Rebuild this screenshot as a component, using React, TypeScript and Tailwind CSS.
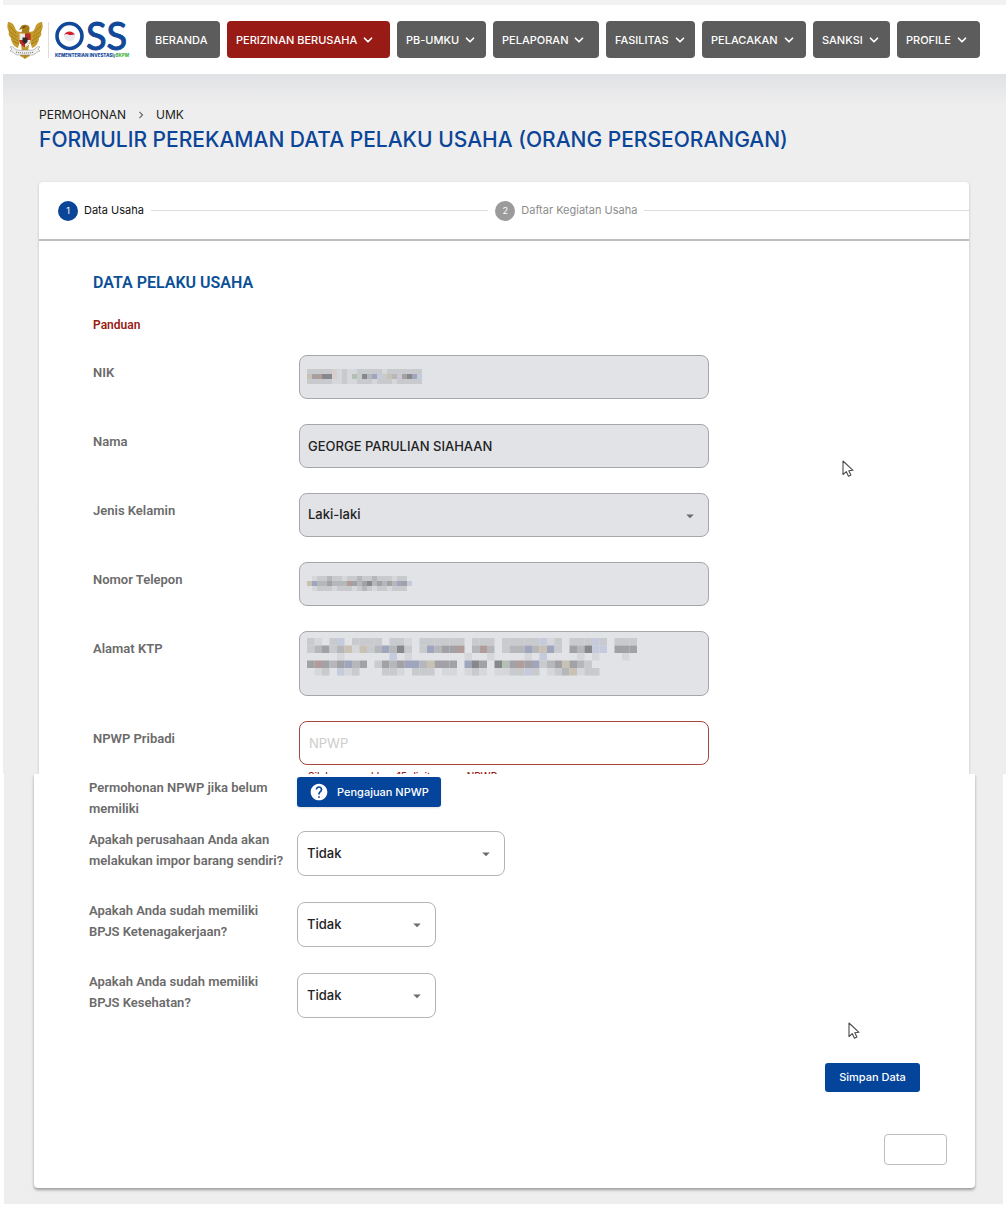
import type { ReactNode } from 'react';
import { FiChevronDown } from 'react-icons/fi';
import { MdArrowDropDown, MdChevronRight, MdHelp } from 'react-icons/md';

interface NavItem {
    label: string;
    width: string;
    menu?: boolean;
    active?: boolean;
}

const NAV_ITEMS: NavItem[] = [
    { label: 'BERANDA', width: 'min-w-[74px]' },
    { label: 'PERIZINAN BERUSAHA', width: 'min-w-[163px]', menu: true, active: true },
    { label: 'PB-UMKU', width: 'min-w-[89px]', menu: true },
    { label: 'PELAPORAN', width: 'min-w-[106px]', menu: true },
    { label: 'FASILITAS', width: 'min-w-[89px]', menu: true },
    { label: 'PELACAKAN', width: 'min-w-[104px]', menu: true },
    { label: 'SANKSI', width: 'min-w-[77px]', menu: true },
    { label: 'PROFILE', width: 'min-w-[83px]', menu: true },
];

// Each letter is one block of the mosaic; a space leaves the field colour
const TONES: Record<string, string> = {
    a: '#d6d7da',
    b: '#c9cacd',
    c: '#b6b7ba',
    d: '#a2a2a6',
    e: '#87888c',
    p: '#d9cdd0',
    r: '#b09c98',
    n: '#9fa5bd',
    l: '#c5cbdc',
    g: '#b4bfb5',
    y: '#c8c1b4',
};

const MASK_NIK = ['bbbbbpabaabbbbbabbbbbbb', 'ydreepabagbecnlbycbdenl', 'bbbbbaabaabbbabbbabbbbb'];
const MASK_PHONE = [' abbcbbabbcbbcbbbabb', 'ynccdcccrdcdecdcdcndl', ' abbbabbbabcbabbabbb'];
const MASK_ADDRESS = [
    'ba bl bbbb bba bbbbbb bbb bbbbblab bbblb bbb',
    'bcdbcyaybcnceb bncddr crc bccncynb dcell ddd',
    '    a      l a       a  a    a l    a a   a ',
    'drdcdncd bdcdnncyddd ned egdrdnbcdydcb',
    ' ab lab   bba bbb aa aba aabblb abcyabb',
];

function Mosaic({ rows, block }: { rows: string[]; block: number }) {
    const columns = Math.max(...rows.map((row) => row.length));
    return (
        <svg width={columns * block} height={rows.length * block} aria-hidden="true">
            {rows.map((row, y) =>
                row.split('').map((tone, x) =>
                    TONES[tone] ? (
                        <rect key={`${x}-${y}`} x={x * block} y={y * block} width={block} height={block} fill={TONES[tone]} />
                    ) : null
                )
            )}
        </svg>
    );
}

function Garuda() {
    return (
        <svg width="37" height="38" viewBox="0 0 37 38" role="img" aria-label="Garuda Pancasila">
            <path d="M1 1c3 0 6 2 7 6 1 3 3 4 6 4l-1 9-2 7c-3-1-5-3-6-6-1-1-1-3-1-4-2-2-3-4-2-6C0 8 0 4 1 1z" fill="#c39a2b" />
            <path d="M35 1c-3 0-6 2-7 6-1 3-3 4-6 4l1 9 2 7c3-1 5-3 6-6 1-1 1-3 1-4 2-2 3-4 2-6 2-3 2-7 1-10z" fill="#c39a2b" />
            <path d="M2 5l7 7M2 10l8 6M4 15l7 5M6 20l6 3M34 5l-7 7M34 10l-8 6M32 15l-7 5M30 20l-6 3" stroke="#9a7517" strokeWidth=".8" fill="none" />
            <path d="M13 7c1-3 4-4 7-3 3 1 3 4 2 6l2 5-1 8H13l-1-8 3-5v-2l-3 1z" fill="#a87d1c" />
            <path d="M15 6l4-1-2 2z" fill="#4d390c" />
            <path d="M14 24h8l-1 6 2 5-2 1-3 2-3-2-2-1 2-5z" fill="#c39a2b" />
            <path d="M16 29l-1 6M18 29v8M20 29l1 6" stroke="#8f6a10" strokeWidth=".8" />
            <path d="M12.500 12.500H18V19h-5.500zM18 19h5.500c0 3-2 5.500-5.500 7.500z" fill="#ece9e4" />
            <path d="M18 12.500h5.500V19H18zM12.500 19H18v7.500c-3.500-2-5.500-4.500-5.500-7.500z" fill="#bb2a26" />
            <path d="M15.500 16.500h5v4.500L18 23l-2.500-2z" fill="#2c2929" />
            <path d="M3 26c2-1 4 0 5 2 3 2 6 1 10 1s7 1 10-1c1-2 3-3 5-2l-2 2 2 2c-3 0-4 3-7 4-5 0-11 0-16 0-3-1-4-4-7-4l2-2z" fill="#f0f0ee" stroke="#85847e" strokeWidth=".5" />
            <path d="M9 31c3 1 6 1 9 1s6 0 9-1" stroke="#55544f" strokeWidth=".9" strokeDasharray="1 1" fill="none" />
        </svg>
    );
}

function OssLogo() {
    return (
        <svg width="80" height="38" viewBox="0 0 80 38" className="overflow-visible" role="img" aria-label="OSS Kementerian Investasi/BKPM">
            <circle cx="14.500" cy="15" r="12.500" fill="none" stroke="#11489a" strokeWidth="3.600" />
            <path d="M9 14a6 6 0 0 1 11 0c-2-1-4 1-6 0s-3-1-5 0z" fill="#d2202c" />
            <path d="M9 14c2-1 3-1 5 0s4-1 6 0c0 5-3 6-5 6s-6-1-6-6z" fill="#e9e9ee" />
            <text x="31" y="29" fontFamily="Lato, sans-serif" fontWeight="400" fontSize="38" fill="#11489a" stroke="#11489a" strokeWidth="1">SS</text>
            <text x="0" y="36" fontFamily="Inter, sans-serif" fontWeight="800" fontSize="4.500" fill="#11489a">
                KEMENTERIAN INVESTASI/<tspan fontStyle="italic" fill="#4fb748">BKPM</tspan>
            </text>
        </svg>
    );
}

function Cursor() {
    return (
        <svg width="12" height="18" viewBox="0 0 12 18" aria-hidden="true">
            <path d="M1 1v13.500l3.300-2.800 2.200 4.600 2.400-1.200-2.100-4.300 4.200-.5z" fill="#fff" stroke="#4a4a4e" strokeWidth="1.100" strokeLinejoin="round" />
        </svg>
    );
}

function Field({ id, label, children }: { id: string; label: string; children: ReactNode }) {
    return (
        <div className="flex items-start">
            <label htmlFor={id} className="w-[206px] shrink-0 pt-2 text-[13px] leading-5 font-semibold text-[#6b6b6b]">{label}</label>
            <div className="relative w-full max-w-[410px]">{children}</div>
        </div>
    );
}

function Question({ id, label, width }: { id: string; label: string; width: string }) {
    return (
        <div className="flex items-start">
            <label htmlFor={id} className="w-[208px] shrink-0 pr-3 text-[13px] leading-[21px] font-semibold text-[#6b6b6b]">{label}</label>
            <div className={`relative mt-[2px] ${width}`}>
                <select id={id} className="h-[45px] w-full appearance-none rounded-lg border border-[#b4b4b6] bg-white px-[9px] font-[Inter,sans-serif] text-[13px] font-medium text-[#222]">
                    <option>Tidak</option>
                </select>
                <MdArrowDropDown className="pointer-events-none absolute top-[14px] right-[10px] text-lg text-[#6b6b6f]" />
            </div>
        </div>
    );
}

const disabledField = 'block w-full rounded-lg border border-[#a5a7ab] bg-[#e1e3e7] px-2 font-[Inter,sans-serif] text-[13px] font-medium text-[#222]';

export default function App() {
    return (
        <div className="relative min-h-screen bg-white pb-[10px] font-[Roboto,sans-serif]">
            <header className="ml-[3px] border-t-[5px] border-[#f2f2f2] bg-white">
                <div className="flex h-[69px] items-center pl-1">
                    <a href="#" className="flex items-center">
                        <Garuda />
                        <span className="mr-[6px] ml-1 h-9 w-px bg-[#ddd]" />
                        <OssLogo />
                    </a>
                    <nav className="ml-[11px] flex gap-[7px] font-[Inter,sans-serif]">
                        {NAV_ITEMS.map((item) => (
                            <button
                                key={item.label}
                                type="button"
                                className={`flex h-[37px] items-center gap-1 rounded-[4px] pt-px pl-[9px] text-[11px] font-medium whitespace-nowrap text-white ${item.width} ${item.active ? 'bg-[#991b15]' : 'bg-[#5c5c5c]'}`}
                            >
                                {item.label}
                                {item.menu && <FiChevronDown className="text-sm" strokeWidth={3} />}
                            </button>
                        ))}
                    </nav>
                </div>
            </header>

            <main>
                <section className="ml-[3px] bg-[#eee] bg-linear-to-b from-[#e1e2e5] to-[#eee] to-[32px] pt-8 pr-[37px] pl-9">
                    <div className="flex items-center font-[Inter,sans-serif] text-xs leading-[18px] text-[#222]">
                        <a href="#">PERMOHONAN</a>
                        <MdChevronRight className="mx-2 text-sm text-[#666]" />
                        <a href="#">UMK</a>
                    </div>
                    <h1 className="mt-[2px] font-[Inter,sans-serif] text-[21px] leading-7 font-medium text-[#0b4597]">
                        FORMULIR PEREKAMAN DATA PELAKU USAHA (ORANG PERSEORANGAN)
                    </h1>

                    <div className="mt-7 overflow-hidden rounded-t bg-white shadow-[0_1px_3px_rgba(0,0,0,0.2)]">
                        <ol className="flex h-[59px] items-center border-b-2 border-[#bdbdbd] pl-[19px] font-[Inter,sans-serif] text-[11px]">
                            <li className="flex w-[48%] items-center">
                                <span className="flex size-5 items-center justify-center rounded-full bg-[#0b4597] text-[9px] text-white">1</span>
                                <span className="ml-[6px] text-[#111]">Data Usaha</span>
                                <span className="mx-[7px] h-px flex-1 bg-[#ddd]" />
                            </li>
                            <li className="flex flex-1 items-center">
                                <span className="flex size-5 items-center justify-center rounded-full bg-[#9b9b9b] text-[9px] text-white">2</span>
                                <span className="ml-[6px] text-[#8d8d8d]">Daftar Kegiatan Usaha</span>
                                <span className="ml-[7px] h-px flex-1 bg-[#ddd]" />
                            </li>
                        </ol>

                        <div className="px-[54px] pt-8">
                            <h2 className="text-base leading-5 font-semibold text-[#0b4f96]">DATA PELAKU USAHA</h2>
                            <a href="#" className="mt-6 block text-xs leading-4 font-semibold text-[#991b15]">Panduan</a>

                            <form className="mt-[22px] flex flex-col gap-[25px]">
                                <Field id="nik" label="NIK">
                                    <input id="nik" readOnly className={`${disabledField} h-[44px]`} />
                                    <div className="pointer-events-none absolute top-[14px] left-2">
                                        <Mosaic rows={MASK_NIK} block={5} />
                                    </div>
                                </Field>
                                <Field id="nama" label="Nama">
                                    <input id="nama" readOnly value="GEORGE PARULIAN SIAHAAN" className={`${disabledField} h-[44px]`} />
                                </Field>
                                <Field id="kelamin" label="Jenis Kelamin">
                                    <select id="kelamin" className={`${disabledField} h-[44px] appearance-none`}>
                                        <option>Laki-laki</option>
                                    </select>
                                    <MdArrowDropDown className="pointer-events-none absolute top-[14px] right-[10px] text-lg text-[#6b6b6f]" />
                                </Field>
                                <Field id="telepon" label="Nomor Telepon">
                                    <input id="telepon" readOnly className={`${disabledField} h-[44px]`} />
                                    <div className="pointer-events-none absolute top-[14px] left-2">
                                        <Mosaic rows={MASK_PHONE} block={5} />
                                    </div>
                                </Field>
                                <Field id="alamat" label="Alamat KTP">
                                    <textarea id="alamat" readOnly className={`${disabledField} h-[65px] resize-none`} />
                                    <div className="pointer-events-none absolute top-[7px] left-2">
                                        <Mosaic rows={MASK_ADDRESS} block={7.5} />
                                    </div>
                                </Field>
                                <Field id="npwp" label="NPWP Pribadi">
                                    <input
                                        id="npwp"
                                        placeholder="NPWP"
                                        className="block h-[44px] w-full rounded-lg border border-[#a5453f] bg-white px-[9px] font-[Inter,sans-serif] text-[13px] placeholder:text-[#ccc]"
                                    />
                                    <p className="mt-[5px] h-1 overflow-hidden pl-[9px] font-[Inter,sans-serif] text-[10px] leading-3 font-medium text-[#991b15]">
                                        Silakan masukkan 15 digit nomor NPWP
                                    </p>
                                </Field>
                            </form>
                        </div>
                    </div>
                </section>

                <section className="mr-[3px] ml-1 overflow-hidden bg-[#eee] pr-7 pb-4 pl-[30px]">
                    <div className="rounded-b bg-white pr-7 pb-[23px] pl-[55px] shadow-[0_2px_3px_rgba(0,0,0,0.35)]">
                        <div className="flex items-start pt-[3px]">
                            <p className="w-[208px] shrink-0 pr-4 text-[13px] leading-[21px] font-semibold text-[#6b6b6b]">Permohonan NPWP jika belum memiliki</p>
                            <button type="button" className="flex h-[30px] items-center gap-2 rounded-[3px] bg-[#04449a] px-3 font-[Inter,sans-serif] text-[11px] font-medium text-white shadow-sm">
                                <MdHelp className="text-xl" />
                                Pengajuan NPWP
                            </button>
                        </div>
                        <div className="mt-[10px] flex flex-col gap-6">
                            <Question id="impor" label="Apakah perusahaan Anda akan melakukan impor barang sendiri?" width="w-[208px]" />
                            <Question id="ketenagakerjaan" label="Apakah Anda sudah memiliki BPJS Ketenagakerjaan?" width="w-[139px]" />
                            <Question id="kesehatan" label="Apakah Anda sudah memiliki BPJS Kesehatan?" width="w-[139px]" />
                        </div>
                        <div className="mt-[45px] flex justify-end pr-[27px]">
                            <button type="button" className="h-[29px] w-[95px] rounded-[3px] bg-[#04449a] font-[Inter,sans-serif] text-[11px] font-medium text-white">
                                Simpan Data
                            </button>
                        </div>
                        <div className="mt-[42px] flex justify-end">
                            <button type="button" aria-label="Kembali" className="h-[31px] w-[63px] rounded border border-[#bdbdbd] bg-white" />
                        </div>
                    </div>
                </section>
            </main>

            {/* Mouse pointers */}
            <div className="pointer-events-none absolute top-[460px] left-[842px]"><Cursor /></div>
            <div className="pointer-events-none absolute top-[1022px] left-[848px]"><Cursor /></div>
        </div>
    );
}
